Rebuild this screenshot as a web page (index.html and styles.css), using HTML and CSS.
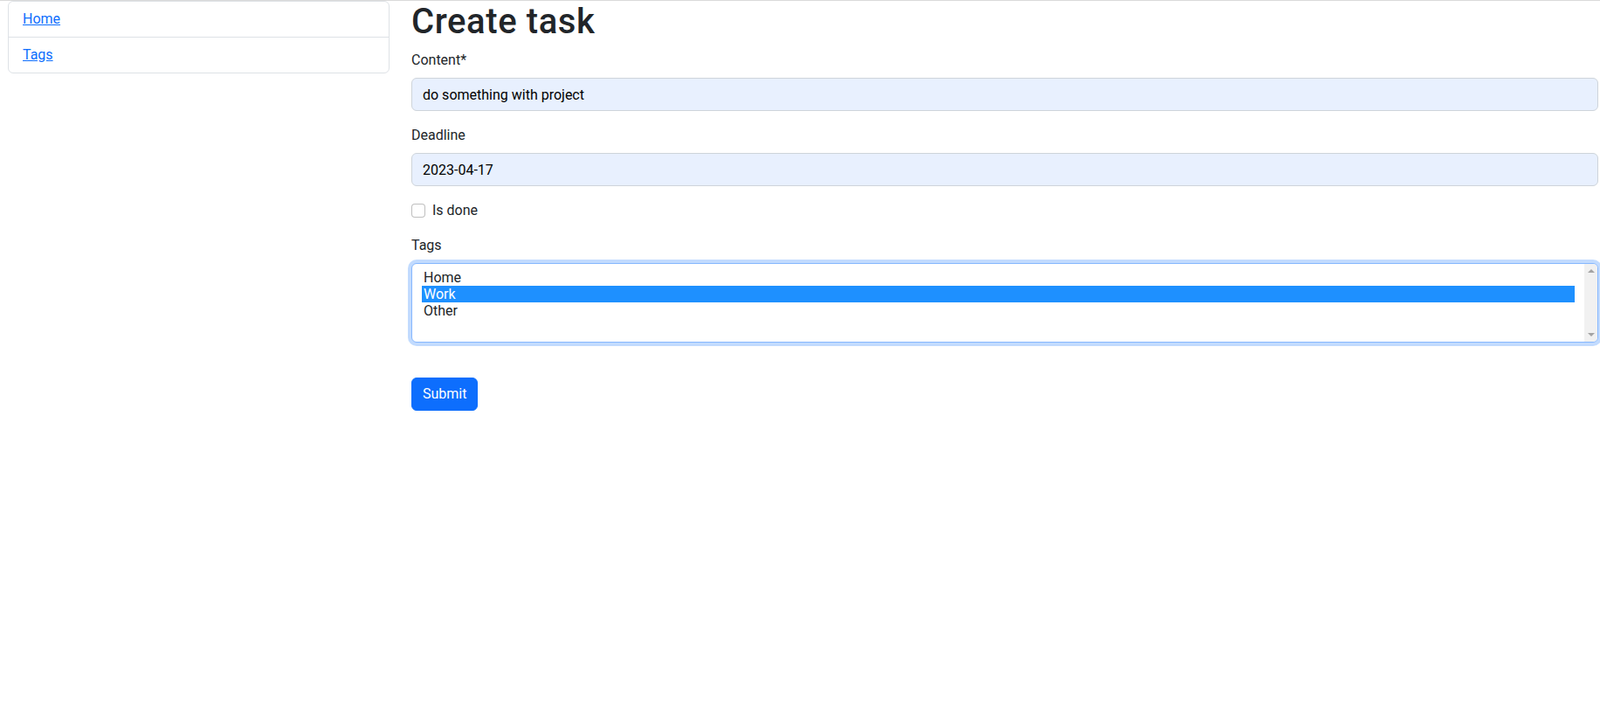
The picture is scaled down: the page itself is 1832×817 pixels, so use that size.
FILE: index.html
```html
<!DOCTYPE html>
<html lang="en">
<head>
<meta charset="utf-8">
<title>Create task</title>
<link rel="stylesheet" href="styles.css">
</head>
<body>
<div class="page">
  <aside class="sidebar">
    <nav class="list-group">
      <a class="list-item" href="#">Home</a>
      <a class="list-item" href="#">Tags</a>
    </nav>
  </aside>
  <main class="main">
    <h1 class="title">Create task</h1>
    <form class="form">
      <div class="field">
        <label class="label" for="content">Content*</label>
        <input class="control autofill" id="content" type="text" value="do something with project">
      </div>
      <div class="field">
        <label class="label" for="deadline">Deadline</label>
        <input class="control autofill" id="deadline" type="text" value="2023-04-17">
      </div>
      <div class="field check">
        <input class="checkbox" id="done" type="checkbox">
        <label class="check-label" for="done">Is done</label>
      </div>
      <div class="field">
        <div class="label">Tags</div>
        <div class="listbox" role="listbox" aria-multiselectable="true">
          <div class="options">
            <div class="option" role="option">Home</div>
            <div class="option selected" role="option" aria-selected="true">Work</div>
            <div class="option" role="option">Other</div>
          </div>
          <div class="scrollbar">
            <span class="arrow up"></span>
            <span class="arrow down"></span>
          </div>
        </div>
      </div>
      <div class="actions">
        <button class="btn" type="button">Submit</button>
      </div>
    </form>
  </main>
</div>
</body>
</html>
```

FILE: styles.css
```css
* { box-sizing: border-box; }
html, body { margin: 0; padding: 0; }
body {
  font-family: Roboto, "Liberation Sans", sans-serif;
  font-size: 16px;
  line-height: 24px;
  color: #212529;
  background: #fff;
  border-top: 1px solid #dadada;
}
.page {
  display: flex;
  gap: 25px;
  padding: 0 2px 0 9px;
}
.sidebar {
  width: 437px;
  flex: 0 0 437px;
}
.list-group {
  display: flex;
  flex-direction: column;
  border: 1px solid #dee2e6;
  border-radius: 6px;
}
.list-item {
  padding: 8px 16px 8px 16px;
  color: #0d6efd;
  text-decoration: underline;
}
.list-item + .list-item { border-top: 1px solid #dee2e6; }
.main {
  flex: 1;
  min-width: 0;
}
.title {
  margin: 0 0 8px;
  font-size: 40px;
  font-weight: 500;
  line-height: 48px;
  letter-spacing: 0.6px;
}
.form { display: flex; flex-direction: column; }
.field { margin-bottom: 16px; }
.label {
  display: block;
  margin-bottom: 8px;
}
.control {
  display: block;
  width: 100%;
  height: 38px;
  padding: 6px 12px;
  font: inherit;
  line-height: 24px;
  border: 1px solid #ced4da;
  border-radius: 6px;
  outline: none;
}
.autofill {
  background: #e8f0fe;
  color: #000;
}
.check {
  display: flex;
  align-items: center;
  gap: 8px;
  min-height: 24px;
}
.checkbox {
  appearance: none;
  margin: 0;
  width: 16px;
  height: 16px;
  border: 1px solid rgba(0, 0, 0, 0.25);
  border-radius: 4px;
  background: #fff;
}
.check-label { line-height: 24px; }
.listbox {
  display: flex;
  height: 91px;
  border: 1px solid #86b7fe;
  border-radius: 6px;
  box-shadow: 0 0 0 4px rgba(13, 110, 253, 0.25);
  background: #fff;
  overflow: hidden;
}
.options {
  flex: 1;
  padding: 6px 11px 6px 11px;
  line-height: 19px;
  color: #212529;
}
.option { padding-left: 2px; }
.option.selected {
  background: #1e90ff;
  color: #fff;
}
.scrollbar {
  position: relative;
  flex: 0 0 15px;
  background: #f1f1f1;
}
.arrow {
  position: absolute;
  left: 4px;
  width: 0;
  height: 0;
  border-left: 4px solid transparent;
  border-right: 4px solid transparent;
}
.arrow.up { top: 6px; border-bottom: 4px solid #a3a3a3; }
.arrow.down { bottom: 6px; border-top: 4px solid #a3a3a3; }
.actions { margin-top: 24px; }
.btn {
  font: inherit;
  line-height: 24px;
  padding: 6px 12px;
  color: #fff;
  background: #0d6efd;
  border: 1px solid #0d6efd;
  border-radius: 6px;
}
```
